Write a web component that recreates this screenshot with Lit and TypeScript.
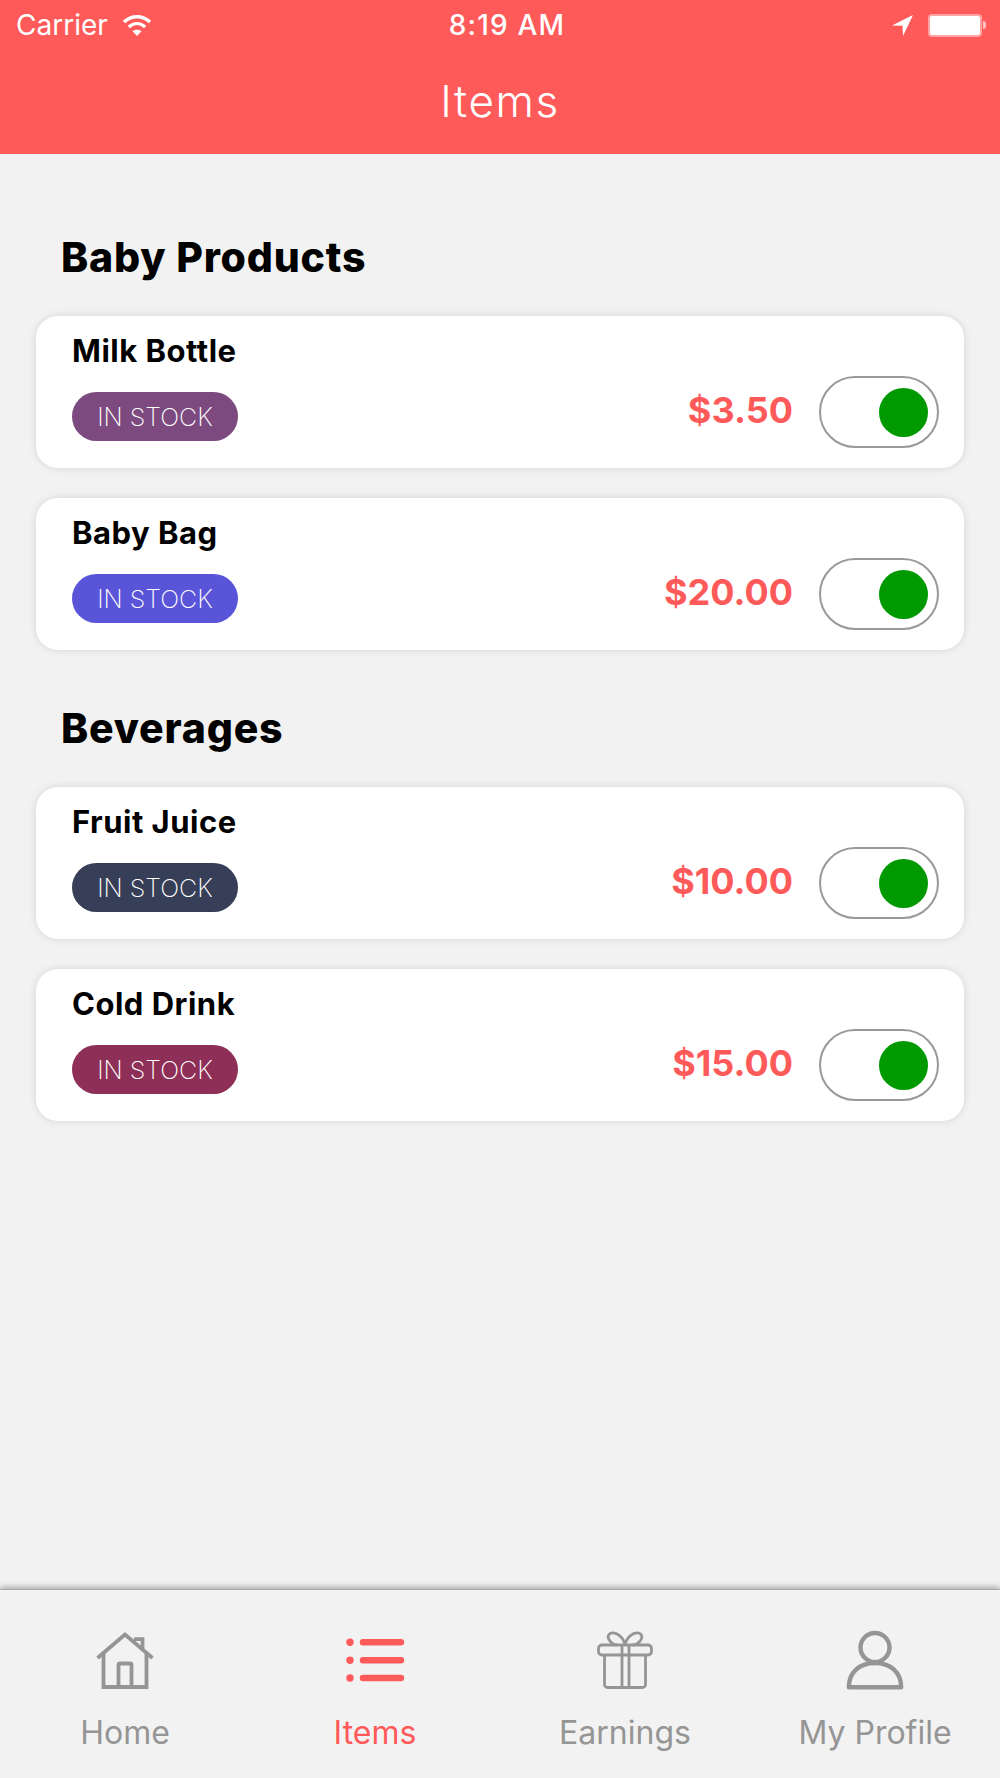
import { LitElement, html, css, svg } from 'lit';
import { customElement } from 'lit/decorators.js';

type Item = { name: string; price: string; color: string };

const sections: { title: string; items: Item[] }[] = [
  {
    title: 'Baby Products',
    items: [
      { name: 'Milk Bottle', price: '$3.50', color: '#7c4a7e' },
      { name: 'Baby Bag', price: '$20.00', color: '#5a55d8' },
    ],
  },
  {
    title: 'Beverages',
    items: [
      { name: 'Fruit Juice', price: '$10.00', color: '#363f57' },
      { name: 'Cold Drink', price: '$15.00', color: '#8e2f58' },
    ],
  },
];

const homeIcon = svg`
  <g stroke-width="3.8">
    <path d="M2.500 28 30 4.500 57.500 28" />
    <path d="M8.500 23v34h43V23" />
    <path d="M23.500 57V35a1.500 1.500 0 0 1 1.500-1.500h10a1.500 1.500 0 0 1 1.500 1.500v22" />
    <path d="M39 9.200h8.500v11" />
  </g>
`;
const listIcon = svg`
  <circle cx="5" cy="12.3" r="3.7" fill="currentColor" stroke="none" />
  <circle cx="5" cy="30.3" r="3.7" fill="currentColor" stroke="none" />
  <circle cx="5" cy="48" r="3.7" fill="currentColor" stroke="none" />
  <path d="M18 12.3h38M18 30.3h38M18 48h38" stroke-width="6.4" stroke-linecap="round" />
`;
const giftIcon = svg`
  <g stroke-width="2.8">
    <rect x="3.500" y="15" width="53" height="10" rx="3.500" />
    <path d="M9.500 25v29.500a3 3 0 0 0 3 3h35a3 3 0 0 0 3-3V25" />
    <path d="M27 15v42.500M34 15v42.500" />
    <path d="M30 14C26 3 17 1 14 4.500c-3 4 3 10 8 10.500M30 14c4-11 13-13 16-9.500 3 4-3 10-8 10.500" />
  </g>
`;
const userIcon = svg`
  <g stroke-width="4.4">
    <circle cx="30" cy="17.500" r="14.500" />
    <path d="M3.800 57.300C3.800 42 15 33 30 33s26.200 9 26.200 24.300Z" stroke-linejoin="round" />
  </g>
`;

const tabs = [
  { label: 'Home', icon: homeIcon, active: false },
  { label: 'Items', icon: listIcon, active: true },
  { label: 'Earnings', icon: giftIcon, active: false },
  { label: 'My Profile', icon: userIcon, active: false },
];

@customElement('app-root')
export class AppRoot extends LitElement {
  static styles = css`
    :host {
      display: block;
    }
    .screen {
      display: flex;
      flex-direction: column;
      width: 1000px;
      height: 1778px;
      background: #f2f2f2;
      font-family: Inter, 'Liberation Sans', sans-serif;
      color: #000;
    }
    .header {
      height: 154px;
      background: #ff5a5a;
      color: #fff;
      flex: none;
    }
    .status {
      display: grid;
      grid-template-columns: 1fr auto 1fr;
      align-items: center;
      height: 50px;
      padding: 0 14px 0 16px;
      font-size: 28px;
    }
    .status-left {
      display: flex;
      align-items: center;
      gap: 14px;
    }
    .status-time {
      padding-left: 12px;
      font-weight: 500;
      letter-spacing: 1.2px;
    }
    .status-right {
      display: flex;
      align-items: center;
      justify-content: flex-end;
      gap: 15px;
    }
    .battery {
      display: flex;
      align-items: center;
      gap: 1px;
    }
    .battery-body {
      width: 50px;
      height: 19px;
      background: #fff;
      border: 2px solid #ffa3a3;
      border-radius: 4px;
    }
    .battery-nub {
      width: 3px;
      height: 8px;
      background: #ffc0c0;
      border-radius: 0 3px 3px 0;
    }
    .title {
      margin: 25px 0 0;
      text-align: center;
      font-size: 44px;
      font-weight: 300;
      line-height: 52px;
      letter-spacing: 1.6px;
    }
    .content {
      flex: 1;
      padding: 73px 36px 0;
    }
    .section + .section {
      margin-top: 48px;
    }
    .section-title {
      margin: 0 0 29px 25px;
      font-size: 41px;
      font-weight: 800;
      line-height: 60px;
      letter-spacing: 0.8px;
    }
    .cards {
      display: flex;
      flex-direction: column;
      gap: 30px;
    }
    .card {
      display: flex;
      align-items: flex-end;
      justify-content: space-between;
      height: 152px;
      box-sizing: border-box;
      padding: 13px 25px 20px 36px;
      background: #fff;
      border-radius: 22px;
      box-shadow: 0 0 8px rgba(0, 0, 0, 0.12);
    }
    .card-info {
      display: flex;
      flex-direction: column;
      align-items: flex-start;
      align-self: flex-start;
    }
    .card-name {
      font-size: 31px;
      font-weight: 700;
      line-height: 44px;
      letter-spacing: 0.5px;
    }
    .badge {
      width: 166px;
      height: 49px;
      margin-top: 19px;
      text-align: center;
      font-size: 25px;
      font-weight: 200;
      line-height: 50px;
      color: #fff;
      border-radius: 25px;
    }
    .card-action {
      display: flex;
      align-items: center;
      gap: 26px;
    }
    .price {
      padding-bottom: 5px;
      font-size: 36px;
      font-weight: 700;
      color: #ff5a5a;
    }
    .toggle {
      display: flex;
      align-items: center;
      justify-content: flex-end;
      width: 120px;
      height: 72px;
      box-sizing: border-box;
      padding-right: 9.5px;
      background: #fff;
      border: 2.5px solid #999;
      border-radius: 36px;
    }
    .knob {
      width: 49px;
      height: 49px;
      background: #009a00;
      border-radius: 50%;
    }
    .tabbar {
      display: grid;
      grid-template-columns: repeat(4, 1fr);
      flex: none;
      height: 189px;
      box-sizing: border-box;
      padding-top: 40px;
      border-top: 1px solid #aaa;
      box-shadow: 0 -2px 6px rgba(0, 0, 0, 0.3);
    }
    .tab {
      display: flex;
      flex-direction: column;
      align-items: center;
      color: #959595;
    }
    .tab.active {
      color: #ff5a5a;
    }
    .tab svg {
      width: 60px;
      height: 60px;
      fill: none;
      stroke: currentColor;
      stroke-width: 3.2;
    }
    .tab-label {
      margin-top: 21px;
      font-size: 32px;
      font-weight: 400;
      line-height: 44px;
    }
  `;

  private renderCard(item: Item) {
    return html`
      <div class="card">
        <div class="card-info">
          <div class="card-name">${item.name}</div>
          <div class="badge" style="background:${item.color}">IN STOCK</div>
        </div>
        <div class="card-action">
          <div class="price">${item.price}</div>
          <div class="toggle"><div class="knob"></div></div>
        </div>
      </div>
    `;
  }

  render() {
    return html`
      <div class="screen">
        <div class="header">
          <div class="status">
            <div class="status-left">
              <span>Carrier</span>
              <svg width="30" height="22" viewBox="0 0 30 22" fill="none" stroke="#fff" stroke-width="3.4">
                <path d="M2 8C9.500 1 20.500 1 28 8" />
                <path d="M6.800 13c5-4.500 11.400-4.500 16.400 0" />
                <path d="M15 22 10.500 17.200c2.500-2 6.500-2 9 0Z" fill="#fff" stroke="none" />
              </svg>
            </div>
            <div class="status-time">8:19 AM</div>
            <div class="status-right">
              <svg width="21" height="21" viewBox="0 0 21 21"><path d="M0 10.500 21 0 11 21l-.5-10.300Z" fill="#fff" /></svg>
              <div class="battery">
                <div class="battery-body"></div>
                <div class="battery-nub"></div>
              </div>
            </div>
          </div>
          <h1 class="title">Items</h1>
        </div>
        <div class="content">
          ${sections.map(
            s => html`
              <div class="section">
                <h2 class="section-title">${s.title}</h2>
                <div class="cards">${s.items.map(i => this.renderCard(i))}</div>
              </div>
            `
          )}
        </div>
        <div class="tabbar">
          ${tabs.map(
            t => html`
              <div class="tab ${t.active ? 'active' : ''}">
                <svg viewBox="0 0 60 60">${t.icon}</svg>
                <div class="tab-label">${t.label}</div>
              </div>
            `
          )}
        </div>
      </div>
    `;
  }
}
